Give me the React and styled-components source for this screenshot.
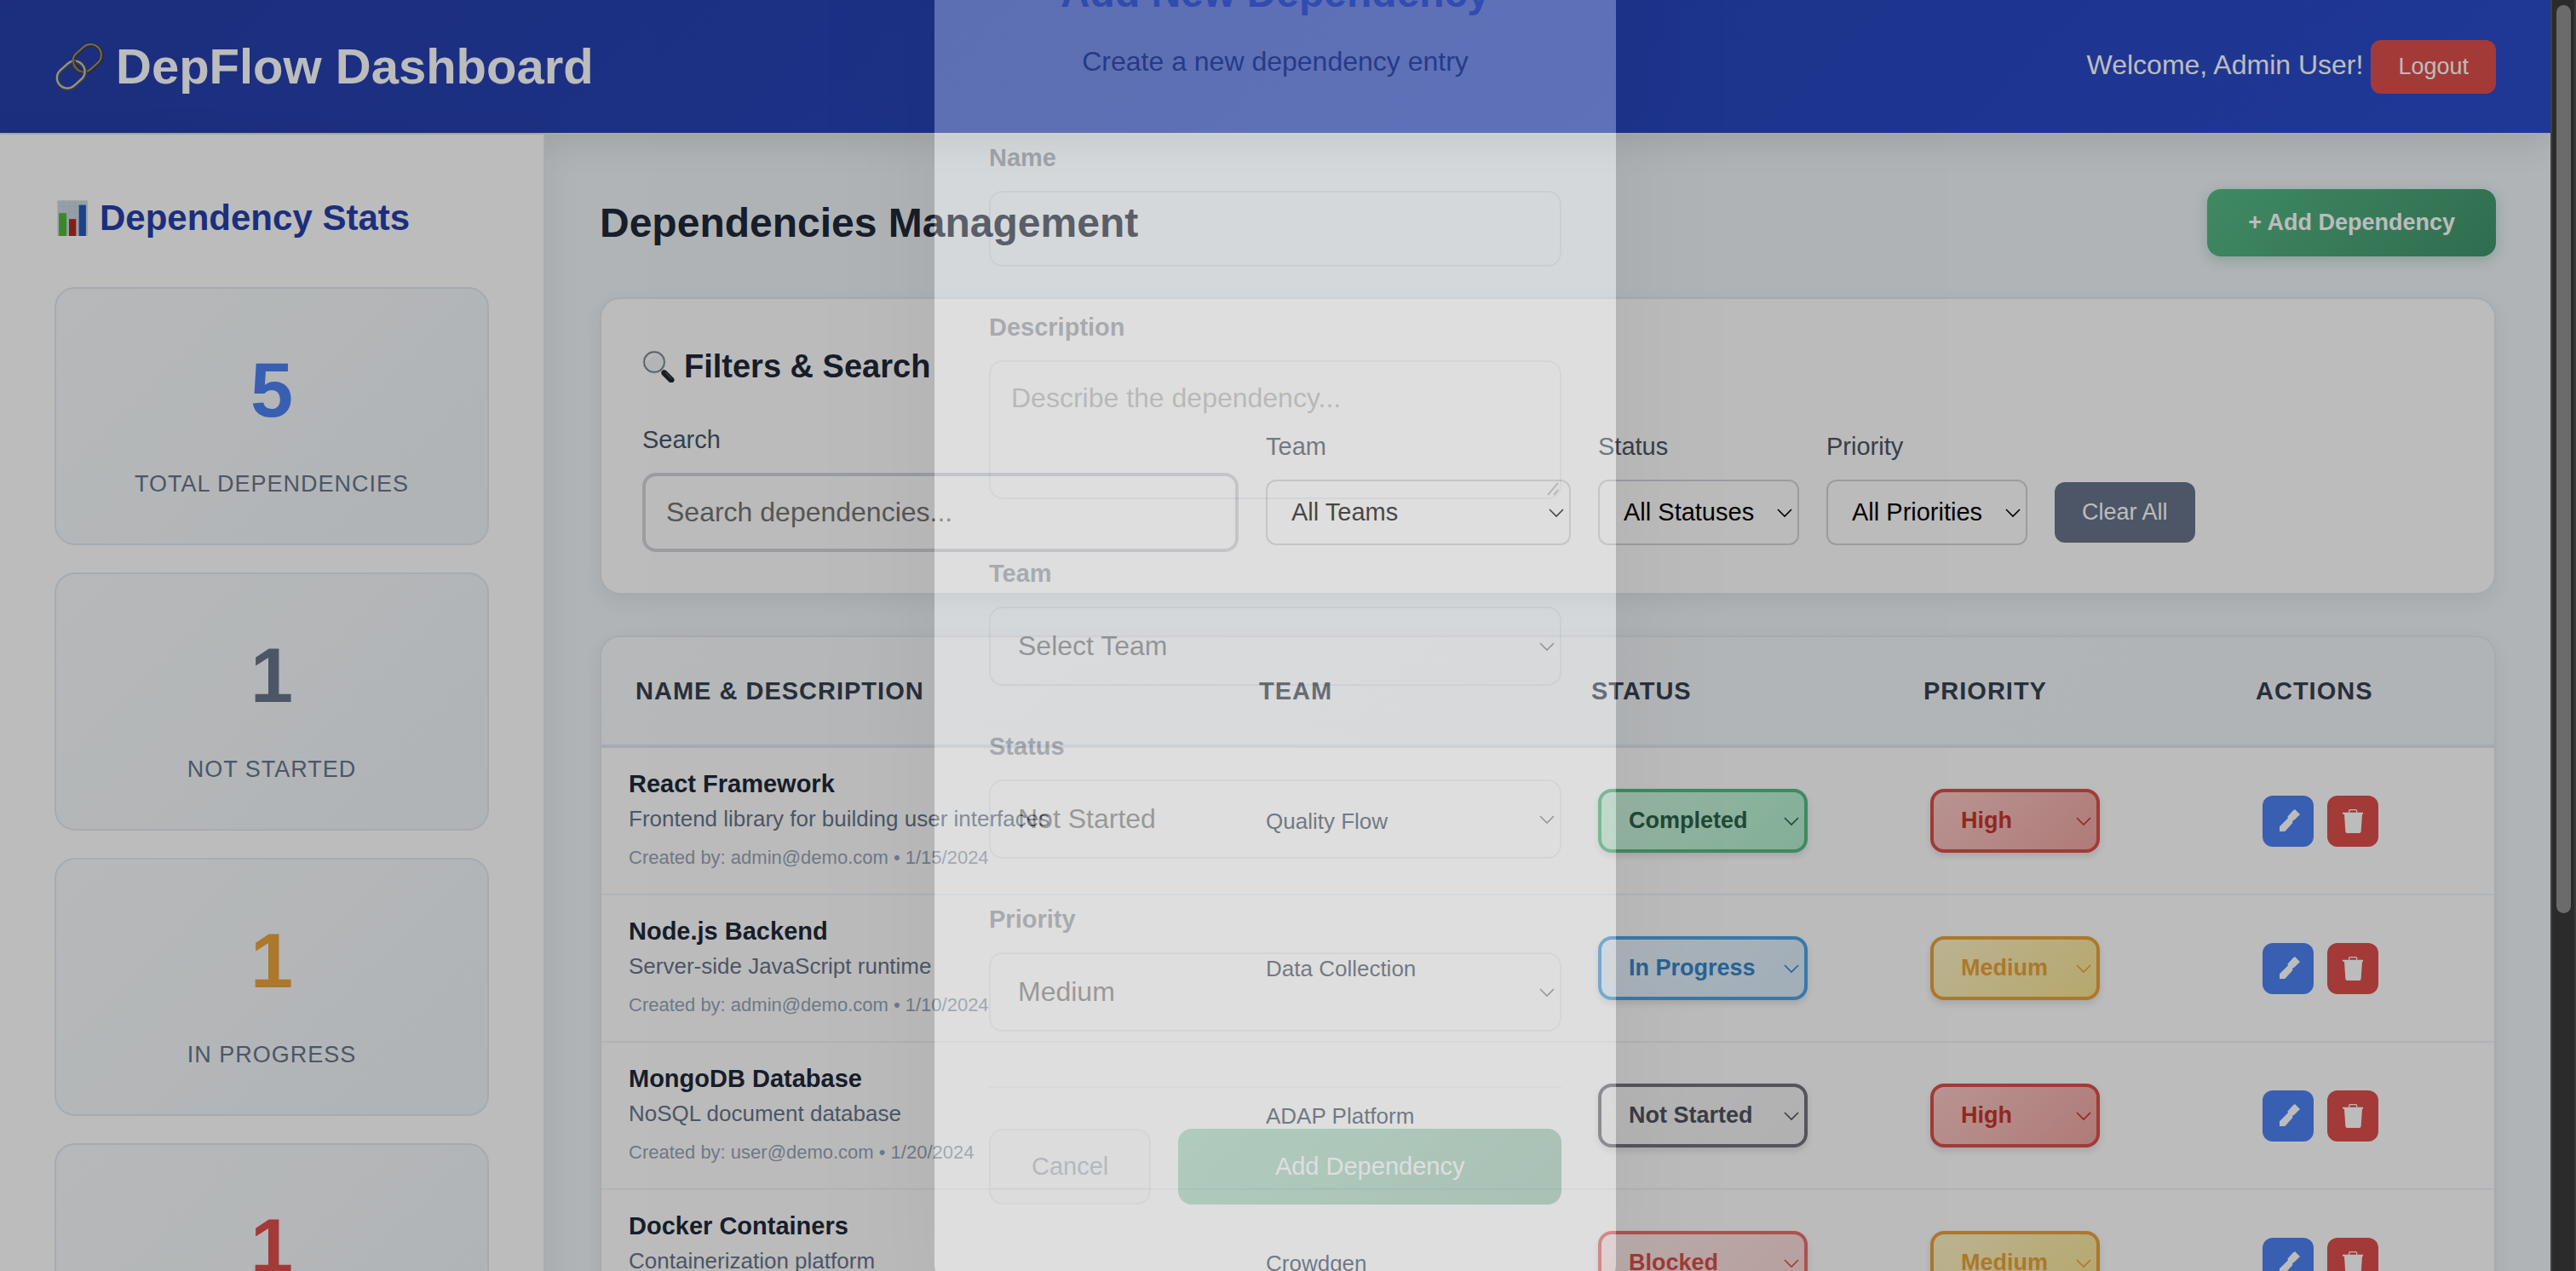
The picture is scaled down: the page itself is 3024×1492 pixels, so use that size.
import React from "react";
import styled, { createGlobalStyle, css } from "styled-components";

const GlobalStyle = createGlobalStyle`
  *, *::before, *::after { box-sizing: border-box; }
  body {
    margin: 0;
    overflow: hidden;
    background: #eff4f8;
    font-family: "Liberation Sans", Arial, Helvetica, sans-serif;
    color: #202939;
  }
  button, input, select, textarea { font-family: inherit; margin: 0; }
`;

/* ---------- page frame ---------- */

const Shell = styled.div`
  display: grid;
  grid-template-columns: minmax(0, 1fr) 30px;
  height: 100vh;
  overflow: hidden;
`;

const Viewport = styled.div`
  position: relative;
  overflow: hidden;
  height: 100vh;
`;

const ScrollTrack = styled.div`
  padding: 6px 0;
  background: #2b2b2b;
  border-left: 2px solid #404040;
  border-right: 2px solid #3a3a3a;
`;

const ScrollThumb = styled.div`
  width: 17px;
  height: 72%;
  margin: 0 auto;
  border-radius: 9px;
  background: #6b6b6b;
`;

const Header = styled.header`
  display: flex;
  align-items: center;
  justify-content: space-between;
  padding: 45px 64px;
  border-bottom: 2px solid #e2e8f0;
  background: linear-gradient(135deg, #263faa 0%, #2a4ccc 100%) padding-box;
  box-shadow: 0 8px 40px rgba(0, 0, 0, 0.1);
  color: #fff;
`;

const Brand = styled.h1`
  display: flex;
  align-items: center;
  gap: 14px;
  margin: 0;
  font-size: 58px;
  line-height: 66px;
  font-weight: 700;
`;

const UserArea = styled.div`
  display: flex;
  align-items: baseline;
  gap: 9px;
  font-size: 32px;
  line-height: 50px;
`;

const LogoutButton = styled.button`
  padding: 16px 32px;
  border: 0;
  border-radius: 12px;
  background: #dd4f4b;
  color: #fff;
  font-size: 27px;
  line-height: 31px;
`;

const Body = styled.div`
  display: grid;
  grid-template-columns: 640px minmax(0, 1fr);
`;

const Sidebar = styled.aside`
  padding: 64px;
  border-right: 2px solid #e2e8f0;
  background: #fff;
  box-shadow: 4px 0 40px rgba(0, 0, 0, 0.06);
`;

const SidebarTitle = styled.h2`
  display: flex;
  align-items: center;
  gap: 11px;
  margin: 0 0 48px;
  color: #263faa;
  font-size: 42px;
  line-height: 67px;
`;

const StatList = styled.div`
  display: grid;
  gap: 32px;
`;

const StatCard = styled.div`
  padding: 48px;
  border: 2px solid #e2e8f0;
  border-radius: 24px;
  background: linear-gradient(135deg, #f8fafc 0%, #eff4f8 100%);
  text-align: center;
`;

const StatNumber = styled.div`
  margin-bottom: 16px;
  color: ${(p) => p.$color};
  font-size: 90px;
  line-height: 143px;
  font-weight: 700;
`;

const StatLabel = styled.div`
  color: #68758c;
  font-size: 27px;
  line-height: 44px;
  letter-spacing: 1px;
  text-transform: uppercase;
`;

const Main = styled.main`
  padding: 64px;
`;

const TitleRow = styled.div`
  display: flex;
  align-items: center;
  justify-content: space-between;
  margin-bottom: 48px;
`;

const PageTitle = styled.h2`
  margin: 0;
  font-size: 48px;
  line-height: 77px;
`;

const PrimaryButton = styled.button`
  padding: 24px 48px;
  border: 0;
  border-radius: 16px;
  background: linear-gradient(135deg, #57bb88 0%, #41946c 100%);
  box-shadow: 0 4px 16px rgba(65, 148, 108, 0.3);
  color: #fff;
  font-size: 27px;
  line-height: 31px;
  font-weight: 700;
`;

const Panel = styled.section`
  border: 2px solid #e2e8f0;
  border-radius: 24px;
  background: #fff;
  box-shadow: 0 8px 24px rgba(0, 0, 0, 0.06);
  overflow: hidden;
`;

/* ---------- filters ---------- */

const FilterPanel = styled(Panel)`
  margin-bottom: 48px;
  padding: 48px;
`;

const FilterTitle = styled.h3`
  display: flex;
  align-items: center;
  gap: 11px;
  margin: 0 0 32px;
  font-size: 38px;
  line-height: 62px;
`;

const FilterRow = styled.div`
  display: flex;
  align-items: center;
  gap: 32px;
`;

const Field = styled.div`
  display: flex;
  flex-direction: column;
  gap: 16px;
  width: ${(p) => p.$width}px;
`;

const FieldLabel = styled.label`
  color: #4a5668;
  font-size: 29px;
  line-height: 46px;
`;

const SearchInput = styled.input`
  width: 100%;
  padding: 24px;
  border: 4px solid #d2d5db;
  border-radius: 16px;
  background: #fff;
  font-size: 32px;
  line-height: 37px;
  height: 93px;
  &::placeholder { color: #757575; opacity: 1; }
`;

const SelectWrap = styled.div`
  position: relative;
  display: ${(p) => (p.$inline ? "inline-block" : "block")};
  color: ${(p) => p.$color || "#000"};
`;

const ChevronIcon = styled.svg`
  position: absolute;
  top: 50%;
  right: ${(p) => p.$right || 8}px;
  width: 18px;
  height: 11px;
  margin-top: -5px;
  pointer-events: none;
`;

const selectReset = css`
  appearance: none;
  display: block;
  width: 100%;
  color: inherit;
`;

const FilterSelect = styled.select`
  ${selectReset}
  padding: 20px 28px;
  border: 2px solid #d2d5db;
  border-radius: 12px;
  background: #fff;
  font-size: 29px;
  line-height: 33px;
`;

const ClearSlot = styled.div`
  display: flex;
  padding-top: 62px;
`;

const ClearButton = styled.button`
  padding: 20px 32px;
  border: 0;
  border-radius: 12px;
  background: #68758c;
  color: #fff;
  font-size: 27px;
  line-height: 31px;
`;

/* ---------- table ---------- */

const Table = styled.table`
  display: block;
`;

const THead = styled.thead`
  display: block;
  border-bottom: 4px solid #e2e8f0;
  background: linear-gradient(135deg, #f8fafc 0%, #eff4f8 100%);
`;

const HeadRow = styled.tr`
  display: grid;
  grid-template-columns: 2fr 1fr 1fr 1fr 240px;
  gap: 48px;
  padding: 40px;
`;

const HeadCell = styled.th`
  padding: 0;
  color: #374151;
  font-size: 29px;
  line-height: 46px;
  letter-spacing: 1px;
  text-align: left;
  text-transform: uppercase;
  white-space: nowrap;
`;

const TBody = styled.tbody`
  display: block;
`;

const Row = styled.tr`
  display: grid;
  grid-template-columns: 2fr 1fr 1fr 1fr 240px;
  align-items: center;
  gap: 32px;
  padding: 24px 32px;
  border-bottom: 2px solid #eff4f8;
`;

const Cell = styled.td`
  padding: 0;
  color: #4a5668;
  font-size: 26px;
  line-height: 42px;
`;

const DepName = styled.div`
  margin-bottom: 4px;
  color: #202939;
  font-size: 29px;
  line-height: 36px;
  font-weight: 700;
`;

const DepDescription = styled.div`
  margin-bottom: 8px;
  color: #68758c;
  font-size: 26px;
  line-height: 39px;
`;

const DepMeta = styled.div`
  color: #98a4b8;
  font-size: 22px;
  line-height: 36px;
`;

const tones = {
  completed: ["#2e6249", "#58bb85", "#d0f5df", "#b2efcf"],
  progress: ["#3686c9", "#4da4e6", "#eaf4fd", "#dcedfb"],
  idle: ["#51545c", "#72757d", "#f8f8f9", "#f0f0f2"],
  blocked: ["#dc4f4b", "#e9716d", "#fdecea", "#f9d8d6"],
  high: ["#c7342e", "#dd4f4b", "#fac9c6", "#eea7a3"],
  medium: ["#e9a33c", "#e9a33c", "#fef2c6", "#f7e493"],
};

const PillSelect = styled.select`
  ${selectReset}
  width: ${(p) => p.$width}px;
  padding: 18px 32px;
  border: 4px solid ${(p) => tones[p.$tone][1]};
  border-radius: 16px;
  background: linear-gradient(
    135deg,
    ${(p) => tones[p.$tone][2]} 0%,
    ${(p) => tones[p.$tone][3]} 100%
  );
  box-shadow: 0 4px 8px rgba(0, 0, 0, 0.12);
  font-size: 27px;
  line-height: 31px;
  font-weight: 700;
`;

const Actions = styled.div`
  display: flex;
  gap: 16px;
`;

const IconButton = styled.button`
  display: grid;
  place-items: center;
  width: 60px;
  height: 60px;
  padding: 0;
  border: 0;
  border-radius: 12px;
  background: ${(p) => (p.$danger ? "#dd4f4b" : "#4d82f1")};
  color: #fff;
`;

/* ---------- dialog, part way through its fade-in ---------- */

const Overlay = styled.div`
  position: absolute;
  inset: 0;
  display: flex;
  align-items: flex-start;
  justify-content: center;
  overflow: hidden;
  background: rgba(0, 0, 0, 0.5);
  opacity: 0.526;
`;

const Dialog = styled.form`
  width: 800px;
  margin-top: -111px;
  padding: 64px 64px 102px;
  border-radius: 32px;
  background: #fff;
  box-shadow: 0 40px 120px rgba(0, 0, 0, 0.3);
  opacity: 0.526;
`;

const DialogHeader = styled.div`
  margin-bottom: 64px;
  text-align: center;
`;

const DialogTitle = styled.h2`
  margin: 0 0 16px;
  color: #5a80ee;
  font-size: 48px;
  line-height: 77px;
`;

const DialogText = styled.p`
  margin: 0;
  color: #374151;
  font-size: 32px;
  line-height: 52px;
`;

const DialogField = styled.div`
  display: flex;
  flex-direction: column;
  gap: 16px;
  margin-bottom: ${(p) => (p.$multiline ? 64 : 48)}px;
`;

const DialogLabel = styled.label`
  color: #374151;
  font-size: 29px;
  line-height: 46px;
  font-weight: 700;
`;

const boxed = css`
  border: 2px solid #d8dde5;
  border-radius: 16px;
  background: #fff;
  font-size: 32px;
  line-height: 37px;
`;

const DialogInput = styled.input`
  ${boxed}
  width: 100%;
  height: 89px;
  padding: 24px;
`;

const DialogTextarea = styled.textarea`
  ${boxed}
  width: 100%;
  height: 163px;
  padding: 24px;
  resize: none;
  display: block;
  &::placeholder { color: #757575; opacity: 1; }
`;

const TextareaWrap = styled.div`
  position: relative;
`;

const Grip = styled.svg`
  position: absolute;
  right: 2px;
  bottom: 4px;
  width: 16px;
  height: 16px;
`;

const DialogSelect = styled.select`
  ${selectReset}
  ${boxed}
  padding: 26px 32px;
`;

const DialogFooter = styled.div`
  display: flex;
  gap: 32px;
  margin-top: 64px;
  padding-top: 48px;
  border-top: 2px solid #e2e8f0;
`;

const CancelButton = styled.button`
  padding: 26px 48px;
  border: 2px solid #d8dde5;
  border-radius: 16px;
  background: #f1f5f4;
  color: #68758c;
  font-size: 29px;
  line-height: 33px;
`;

const SubmitButton = styled.button`
  flex: 1;
  padding: 28px 48px;
  border: 0;
  border-radius: 16px;
  background: linear-gradient(135deg, #57bb88 0%, #41946c 100%);
  color: #fff;
  font-size: 29px;
  line-height: 33px;
`;

/* ---------- drawings ---------- */

function LinkIcon() {
  return (
    <svg width="58" height="58" viewBox="24 32 176 176" fill="none" aria-hidden="true">
      <g transform="rotate(-42 141 92)">
        <rect x="86" y="54" width="110" height="76" rx="38" stroke="#403d3c" strokeWidth="15" />
        <rect x="86" y="52" width="110" height="76" rx="38" stroke="#96928f" strokeWidth="6" />
      </g>
      <g transform="rotate(-42 83 150)">
        <rect x="29" y="114" width="108" height="74" rx="37" stroke="#4c5052" strokeWidth="15" />
        <rect x="29" y="112" width="108" height="74" rx="37" stroke="#c0c9ce" strokeWidth="7" />
      </g>
      <path d="M92 100c4 18 14 30 30 36" stroke="#403d3c" strokeWidth="14" />
      <path d="M90 102c4 18 14 30 30 36" stroke="#96928f" strokeWidth="5" />
    </svg>
  );
}

function ChartIcon() {
  return (
    <svg width="42" height="42" viewBox="12 20 126 127" aria-hidden="true">
      <rect x="22" y="21" width="107" height="126" fill="#cdd8e2" />
      <path
        d="M22 42h107M22 63h107M22 84h107M22 105h107M22 126h107M43 21v126M64 21v126M85 21v126M107 21v126"
        stroke="#c2cfdb"
        strokeWidth="2"
      />
      <rect x="27" y="66" width="27" height="81" fill="#52b83a" />
      <rect x="63" y="87" width="25" height="60" fill="#b22a20" />
      <rect x="98" y="37" width="25" height="110" fill="#245cbc" />
    </svg>
  );
}

function MagnifierIcon() {
  return (
    <svg width="38" height="38" viewBox="0 0 38 38" fill="none" aria-hidden="true">
      <path d="M23 24l3 3" stroke="#8b9196" strokeWidth="4" />
      <path d="M26 27l8 8" stroke="#25282b" strokeWidth="7" strokeLinecap="round" />
      <path d="M27 26l7 7" stroke="#70767a" strokeWidth="1" />
      <circle cx="14" cy="14" r="12" fill="#f4f5f6" stroke="#6f777c" strokeWidth="2" />
      <circle cx="14" cy="14" r="13" stroke="#b9cbd6" strokeWidth="1" />
      <path d="M6 13a8 8 0 0 1 8-7" stroke="#fff" strokeWidth="2" />
    </svg>
  );
}

function PencilIcon() {
  return (
    <svg width="32" height="32" viewBox="90 87 96 96" fill="currentColor" aria-hidden="true">
      <path d="M162 93 180 111 161 130 153 135 154 141 127 171H108V154L138 124 136 119 154 99Z" />
    </svg>
  );
}

function TrashIcon() {
  return (
    <svg width="32" height="32" viewBox="318 87 96 96" fill="currentColor" aria-hidden="true">
      <path d="M353 104v-5q0-4 4-4h19q4 0 4 4v5" fill="none" stroke="currentColor" strokeWidth="4" />
      <path d="M330 104h72v6h-3l-4 61q-1 6-6 6h-43q-5 0-6-6l-4-61h-6Z" />
    </svg>
  );
}

function Chevron({ right }) {
  return (
    <ChevronIcon $right={right} viewBox="0 0 18 11" fill="none" aria-hidden="true">
      <path d="M1 1l8 8 8-8" stroke="currentColor" strokeWidth="1.6" />
    </ChevronIcon>
  );
}

/* ---------- parts ---------- */

const stats = [
  { value: 5, label: "Total Dependencies", color: "#4d82f1" },
  { value: 1, label: "Not Started", color: "#68758c" },
  { value: 1, label: "In Progress", color: "#e9a33c" },
  { value: 1, label: "Blocked", color: "#dd4f4b" },
];

const rows = [
  {
    name: "React Framework",
    description: "Frontend library for building user interfaces",
    meta: "Created by: admin@demo.com • 1/15/2024",
    team: "Quality Flow",
    status: ["Completed", "completed"],
    priority: ["High", "high"],
  },
  {
    name: "Node.js Backend",
    description: "Server-side JavaScript runtime",
    meta: "Created by: admin@demo.com • 1/10/2024",
    team: "Data Collection",
    status: ["In Progress", "progress"],
    priority: ["Medium", "medium"],
  },
  {
    name: "MongoDB Database",
    description: "NoSQL document database",
    meta: "Created by: user@demo.com • 1/20/2024",
    team: "ADAP Platform",
    status: ["Not Started", "idle"],
    priority: ["High", "high"],
  },
  {
    name: "Docker Containers",
    description: "Containerization platform",
    meta: "Created by: admin@demo.com • 1/12/2024",
    team: "Crowdgen",
    status: ["Blocked", "blocked"],
    priority: ["Medium", "medium"],
  },
];

function FilterDropdown({ id, label, option, width }) {
  return (
    <Field $width={width}>
      <FieldLabel htmlFor={id}>{label}</FieldLabel>
      <SelectWrap>
        <FilterSelect id={id}>
          <option>{option}</option>
        </FilterSelect>
        <Chevron />
      </SelectWrap>
    </Field>
  );
}

function Pill({ label, option, tone, width }) {
  return (
    <SelectWrap $inline $color={tones[tone][0]}>
      <PillSelect aria-label={label} $tone={tone} $width={width}>
        <option>{option}</option>
      </PillSelect>
      <Chevron right={10} />
    </SelectWrap>
  );
}

function DialogDropdown({ id, label, option }) {
  return (
    <DialogField>
      <DialogLabel htmlFor={id}>{label}</DialogLabel>
      <SelectWrap>
        <DialogSelect id={id}>
          <option>{option}</option>
        </DialogSelect>
        <Chevron />
      </SelectWrap>
    </DialogField>
  );
}

function DependencyRow({ dep }) {
  return (
    <Row>
      <Cell>
        <DepName>{dep.name}</DepName>
        <DepDescription>{dep.description}</DepDescription>
        <DepMeta>{dep.meta}</DepMeta>
      </Cell>
      <Cell>{dep.team}</Cell>
      <Cell>
        <Pill label={`${dep.name} status`} option={dep.status[0]} tone={dep.status[1]} width={246} />
      </Cell>
      <Cell>
        <Pill label={`${dep.name} priority`} option={dep.priority[0]} tone={dep.priority[1]} width={199} />
      </Cell>
      <Cell>
        <Actions>
          <IconButton type="button" aria-label={`Edit ${dep.name}`}>
            <PencilIcon />
          </IconButton>
          <IconButton type="button" $danger aria-label={`Delete ${dep.name}`}>
            <TrashIcon />
          </IconButton>
        </Actions>
      </Cell>
    </Row>
  );
}

function AddDialog() {
  return (
    <Overlay>
      <Dialog onSubmit={(e) => e.preventDefault()}>
        <DialogHeader>
          <DialogTitle>Add New Dependency</DialogTitle>
          <DialogText>Create a new dependency entry</DialogText>
        </DialogHeader>
        <DialogField>
          <DialogLabel htmlFor="dep-name">Name</DialogLabel>
          <DialogInput id="dep-name" type="text" />
        </DialogField>
        <DialogField $multiline>
          <DialogLabel htmlFor="dep-description">Description</DialogLabel>
          <TextareaWrap>
            <DialogTextarea id="dep-description" placeholder="Describe the dependency..." />
            <Grip viewBox="0 0 16 16" aria-hidden="true">
              <path d="M2 15 14 1M9 15l5-6" stroke="#757575" strokeWidth="2" />
            </Grip>
          </TextareaWrap>
        </DialogField>
        <DialogDropdown id="dep-team" label="Team" option="Select Team" />
        <DialogDropdown id="dep-status" label="Status" option="Not Started" />
        <DialogDropdown id="dep-priority" label="Priority" option="Medium" />
        <DialogFooter>
          <CancelButton type="button">Cancel</CancelButton>
          <SubmitButton type="submit">Add Dependency</SubmitButton>
        </DialogFooter>
      </Dialog>
    </Overlay>
  );
}

export default function App() {
  return (
    <Shell>
      <GlobalStyle />
      <Viewport>
        <Header>
          <Brand>
            <LinkIcon />
            DepFlow Dashboard
          </Brand>
          <UserArea>
            <span>Welcome, Admin User!</span>
            <LogoutButton type="button">Logout</LogoutButton>
          </UserArea>
        </Header>
        <Body>
          <Sidebar>
            <SidebarTitle>
              <ChartIcon />
              Dependency Stats
            </SidebarTitle>
            <StatList>
              {stats.map((s) => (
                <StatCard key={s.label}>
                  <StatNumber $color={s.color}>{s.value}</StatNumber>
                  <StatLabel>{s.label}</StatLabel>
                </StatCard>
              ))}
            </StatList>
          </Sidebar>
          <Main>
            <TitleRow>
              <PageTitle>Dependencies Management</PageTitle>
              <PrimaryButton type="button">+ Add Dependency</PrimaryButton>
            </TitleRow>
            <FilterPanel>
              <FilterTitle>
                <MagnifierIcon />
                Filters &amp; Search
              </FilterTitle>
              <FilterRow>
                <Field $width={700}>
                  <FieldLabel htmlFor="filter-search">Search</FieldLabel>
                  <SearchInput id="filter-search" type="text" placeholder="Search dependencies..." />
                </Field>
                <FilterDropdown id="filter-team" label="Team" option="All Teams" width={358} />
                <FilterDropdown id="filter-status" label="Status" option="All Statuses" width={236} />
                <FilterDropdown id="filter-priority" label="Priority" option="All Priorities" width={236} />
                <ClearSlot>
                  <ClearButton type="button">Clear All</ClearButton>
                </ClearSlot>
              </FilterRow>
            </FilterPanel>
            <Panel>
              <Table>
                <THead>
                  <HeadRow>
                    <HeadCell scope="col">Name &amp; Description</HeadCell>
                    <HeadCell scope="col">Team</HeadCell>
                    <HeadCell scope="col">Status</HeadCell>
                    <HeadCell scope="col">Priority</HeadCell>
                    <HeadCell scope="col">Actions</HeadCell>
                  </HeadRow>
                </THead>
                <TBody>
                  {rows.map((dep) => (
                    <DependencyRow key={dep.name} dep={dep} />
                  ))}
                </TBody>
              </Table>
            </Panel>
          </Main>
        </Body>
        <AddDialog />
      </Viewport>
      <ScrollTrack>
        <ScrollThumb />
      </ScrollTrack>
    </Shell>
  );
}
